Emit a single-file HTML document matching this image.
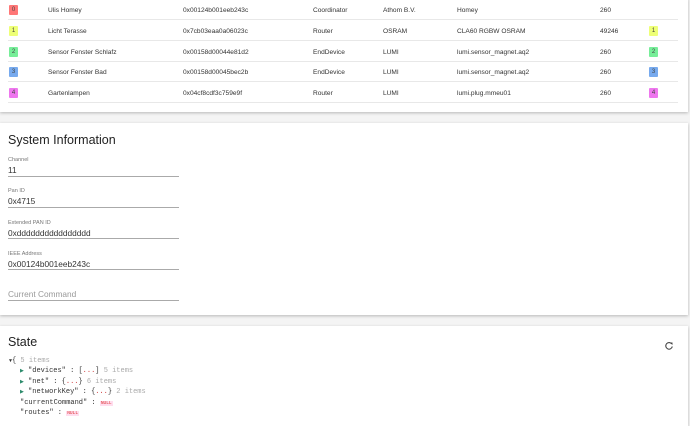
<!DOCTYPE html>
<html><head><meta charset="utf-8"><style>
*{margin:0;padding:0;box-sizing:border-box}
body{width:690px;height:417px;overflow:hidden;background:#f4f4f4;font-family:"Liberation Sans",sans-serif;color:#333;position:relative}
.card{position:absolute;left:0;width:688px;background:#fff;box-shadow:0 1px 3px rgba(0,0,0,.25)}
.row{position:absolute;left:8px;width:670px;height:21px;border-bottom:1px solid #e8e8e8;font-size:6.6px;color:#333}
.row span{position:absolute;top:8px;white-space:nowrap}
.b{width:9px;height:10px;border-radius:1px;font-size:6px;text-align:center;line-height:10px;top:6px!important;color:#444}
h2{position:absolute;left:8px;font-weight:normal;font-size:12.5px;color:#222}
.f{position:absolute;left:8px;width:171px;border-bottom:1px solid #aaa}
.f .l{position:absolute;left:0;font-size:5.5px;color:#777}
.f .v{position:absolute;left:0;font-size:8.3px;color:#333}
.j{position:absolute;font-family:"Liberation Mono",monospace;font-size:7px;color:#333;white-space:nowrap}
.g{color:#aaa}.r{color:#c33}.t{color:#2a8a6a;font-size:5px}
.n{color:#d33;font-size:4.5px;background:#fde;padding:0 1px}
</style></head><body>
<div class="card" style="top:-2px;height:114px">
 <div class="row" style="top:1px"><span class="b" style="left:1px;background:#f77">0</span><span style="left:40px">Ulis Homey</span><span style="left:175px">0x00124b001eeb243c</span><span style="left:305px">Coordinator</span><span style="left:375px">Athom B.V.</span><span style="left:449px">Homey</span><span style="left:592px">260</span></div>
 <div class="row" style="top:22px"><span class="b" style="left:1px;background:#ef7">1</span><span style="left:40px">Licht Terasse</span><span style="left:175px">0x7cb03eaa0a06023c</span><span style="left:305px">Router</span><span style="left:375px">OSRAM</span><span style="left:449px">CLA60 RGBW OSRAM</span><span style="left:592px">49246</span><span class="b" style="left:641px;background:#ef7">1</span></div>
 <div class="row" style="top:43px"><span class="b" style="left:1px;background:#7e9">2</span><span style="left:40px">Sensor Fenster Schlafz</span><span style="left:175px">0x00158d00044e81d2</span><span style="left:305px">EndDevice</span><span style="left:375px">LUMI</span><span style="left:449px">lumi.sensor_magnet.aq2</span><span style="left:592px">260</span><span class="b" style="left:641px;background:#7e9">2</span></div>
 <div class="row" style="top:63px"><span class="b" style="left:1px;background:#7ae">3</span><span style="left:40px">Sensor Fenster Bad</span><span style="left:175px">0x00158d00045bec2b</span><span style="left:305px">EndDevice</span><span style="left:375px">LUMI</span><span style="left:449px">lumi.sensor_magnet.aq2</span><span style="left:592px">260</span><span class="b" style="left:641px;background:#7ae">3</span></div>
 <div class="row" style="top:84px"><span class="b" style="left:1px;background:#e7e">4</span><span style="left:40px">Gartenlampen</span><span style="left:175px">0x04cf8cdf3c759e9f</span><span style="left:305px">Router</span><span style="left:375px">LUMI</span><span style="left:449px">lumi.plug.mmeu01</span><span style="left:592px">260</span><span class="b" style="left:641px;background:#e7e">4</span></div>
</div>
<div class="card" style="top:123px;height:192px">
 <h2 style="top:10px">System Information</h2>
 <div class="f" style="top:33px;height:21px"><span class="l" style="top:1px">Channel</span><span class="v" style="top:9px">11</span></div>
 <div class="f" style="top:63px;height:22px"><span class="l" style="top:2px">Pan ID</span><span class="v" style="top:10px">0x4715</span></div>
 <div class="f" style="top:95px;height:21px"><span class="l" style="top:2px">Extended PAN ID</span><span class="v" style="top:10px">0xdddddddddddddddd</span></div>
 <div class="f" style="top:126px;height:21px"><span class="l" style="top:2px">IEEE Address</span><span class="v" style="top:10px">0x00124b001eeb243c</span></div>
 <div class="f" style="top:158px;height:20px"><span class="v" style="top:8px;color:#999">Current Command</span></div>
</div>
<div class="card" style="top:326px;height:100px">
 <h2 style="top:9px">State</h2>
 <svg style="position:absolute;left:664px;top:15px" width="10" height="10" viewBox="0 0 10 10"><path d="M7.8 3A3.3 3.3 0 1 0 8.3 5.5" fill="none" stroke="#444" stroke-width="1.1"/><path d="M6 1.5L8.5 1.5 8.5 4z" fill="#444"/></svg>
 <div class="j" style="left:9px;top:31px"><span style="font-size:5px">▼</span>{ <span class="g">5 items</span></div>
 <div class="j" style="left:20px;top:41px"><span class="t">▶</span> "devices" : [<span class="r">...</span>] <span class="g">5 items</span></div>
 <div class="j" style="left:20px;top:52px"><span class="t">▶</span> "net" : {<span class="r">...</span>} <span class="g">6 items</span></div>
 <div class="j" style="left:20px;top:62px"><span class="t">▶</span> "networkKey" : {<span class="r">...</span>} <span class="g">2 items</span></div>
 <div class="j" style="left:20px;top:73px">"currentCommand" : <span class="n">NULL</span></div>
 <div class="j" style="left:20px;top:83px">"routes" : <span class="n">NULL</span></div>
</div>
</body></html>
